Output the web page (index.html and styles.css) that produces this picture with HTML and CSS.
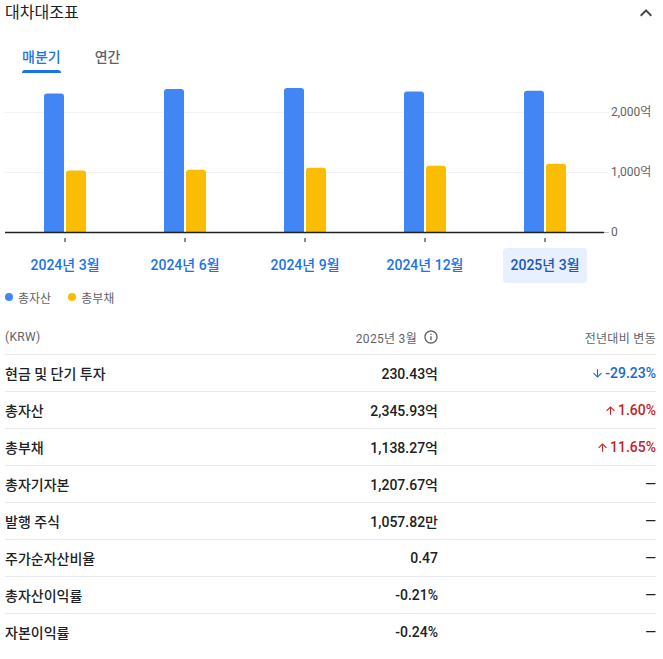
FILE: index.html
```html
<!DOCTYPE html>
<html lang="ko">
<head>
<meta charset="utf-8">
<title>대차대조표</title>
<link rel="stylesheet" href="styles.css">
</head>
<body>
<div class="card">
  <div class="head">
    <h2 class="title">대차대조표</h2>
    <svg class="chevron" viewBox="0 0 24 24" width="24" height="24"><path d="M12 8l-6 6 1.41 1.41L12 10.83l4.59 4.58L18 14z"/></svg>
  </div>

  <div class="tabs">
    <div class="tab active"><span>매분기</span><i class="bar"></i></div>
    <div class="tab"><span>연간</span><i class="bar"></i></div>
  </div>

  <svg class="chart" width="651" height="170" viewBox="0 0 651 170">
    <line class="grid" x1="0" y1="36.5" x2="604" y2="36.5"/>
    <line class="grid" x1="0" y1="96.5" x2="604" y2="96.5"/>
    <line class="grid0" x1="598" y1="156.5" x2="604" y2="156.5"/>
    <text class="ylab" x="606" y="37">2,000억</text>
    <text class="ylab" x="606" y="97">1,000억</text>
    <text class="ylab" x="606" y="157">0</text>

    <path class="b1" d="M39 156V20.4a3 3 0 0 1 3-3h14a3 3 0 0 1 3 3V156z"/>
    <path class="b2" d="M61 156V97.4a3 3 0 0 1 3-3h14a3 3 0 0 1 3 3V156z"/>

    <path class="b1" d="M159 156V16a3 3 0 0 1 3-3h14a3 3 0 0 1 3 3V156z"/>
    <path class="b2" d="M181 156V96.7a3 3 0 0 1 3-3h14a3 3 0 0 1 3 3V156z"/>

    <path class="b1" d="M279 156V15a3 3 0 0 1 3-3h14a3 3 0 0 1 3 3V156z"/>
    <path class="b2" d="M301 156V94.7a3 3 0 0 1 3-3h14a3 3 0 0 1 3 3V156z"/>

    <path class="b1" d="M399 156V18.4a3 3 0 0 1 3-3h14a3 3 0 0 1 3 3V156z"/>
    <path class="b2" d="M421 156V92.7a3 3 0 0 1 3-3h14a3 3 0 0 1 3 3V156z"/>

    <path class="b1" d="M519 156V17.7a3 3 0 0 1 3-3h14a3 3 0 0 1 3 3V156z"/>
    <path class="b2" d="M541 156V90.7a3 3 0 0 1 3-3h14a3 3 0 0 1 3 3V156z"/>

    <line class="axis" x1="0" y1="156.5" x2="599" y2="156.5"/>
    <line class="tick" x1="60" y1="162" x2="60" y2="166"/>
    <line class="tick" x1="180" y1="162" x2="180" y2="166"/>
    <line class="tick" x1="300" y1="162" x2="300" y2="166"/>
    <line class="tick" x1="420" y1="162" x2="420" y2="166"/>
    <line class="tick" x1="540" y1="162" x2="540" y2="166"/>
  </svg>

  <div class="xlabels">
    <div class="xcell"><span class="xbtn">2024년 3월</span></div>
    <div class="xcell"><span class="xbtn">2024년 6월</span></div>
    <div class="xcell"><span class="xbtn">2024년 9월</span></div>
    <div class="xcell"><span class="xbtn">2024년 12월</span></div>
    <div class="xcell"><span class="xbtn selected">2025년 3월</span></div>
  </div>

  <div class="legend">
    <span class="dot blue"></span><span class="ltext">총자산</span>
    <span class="dot yellow"></span><span class="ltext">총부채</span>
  </div>

  <div class="table">
    <div class="row header">
      <div class="c1">(KRW)</div>
      <div class="c2">2025년 3월
        <svg class="info" viewBox="0 0 24 24" width="16" height="16"><path d="M11 7h2v2h-2zm0 4h2v6h-2zm1-9C6.48 2 2 6.48 2 12s4.48 10 10 10 10-4.48 10-10S17.52 2 12 2zm0 18c-4.41 0-8-3.59-8-8s3.59-8 8-8 8 3.59 8 8-3.59 8-8 8z"/></svg>
      </div>
      <div class="c3">전년대비 변동</div>
    </div>
    <div class="row">
      <div class="c1">현금 및 단기 투자</div>
      <div class="c2">230.43억</div>
      <div class="c3 down"><svg class="arrow" viewBox="0 0 24 24" width="13" height="13"><path d="M20 12l-1.41-1.41L13 16.17V4h-2v12.17l-5.58-5.59L4 12l8 8 8-8z"/></svg>-29.23%</div>
    </div>
    <div class="row">
      <div class="c1">총자산</div>
      <div class="c2">2,345.93억</div>
      <div class="c3 up"><svg class="arrow" viewBox="0 0 24 24" width="13" height="13"><path d="M4 12l1.41 1.41L11 7.83V20h2V7.83l5.58 5.59L20 12l-8-8-8 8z"/></svg>1.60%</div>
    </div>
    <div class="row">
      <div class="c1">총부채</div>
      <div class="c2">1,138.27억</div>
      <div class="c3 up"><svg class="arrow" viewBox="0 0 24 24" width="13" height="13"><path d="M4 12l1.41 1.41L11 7.83V20h2V7.83l5.58 5.59L20 12l-8-8-8 8z"/></svg>11.65%</div>
    </div>
    <div class="row">
      <div class="c1">총자기자본</div>
      <div class="c2">1,207.67억</div>
      <div class="c3">—</div>
    </div>
    <div class="row">
      <div class="c1">발행 주식</div>
      <div class="c2">1,057.82만</div>
      <div class="c3">—</div>
    </div>
    <div class="row">
      <div class="c1">주가순자산비율</div>
      <div class="c2">0.47</div>
      <div class="c3">—</div>
    </div>
    <div class="row">
      <div class="c1">총자산이익률</div>
      <div class="c2">-0.21%</div>
      <div class="c3">—</div>
    </div>
    <div class="row">
      <div class="c1">자본이익률</div>
      <div class="c2">-0.24%</div>
      <div class="c3">—</div>
    </div>
  </div>
</div>
</body>
</html>
```

FILE: styles.css
```css
* { box-sizing: border-box; }
html, body { margin: 0; padding: 0; background: #fff; }
body {
  font-family: "Roboto", "Noto Sans CJK KR", sans-serif;
  font-feature-settings: "palt";
  color: #202124;
}
.card { width: 651px; margin-left: 5px; }

.head { height: 26px; display: flex; align-items: center; justify-content: space-between; }
.title { margin: 0; font-size: 16px; font-weight: 400; line-height: 26px; color: #202124; }
.chevron { fill: #444746; margin-right: -1.5px; margin-top: 0; }

.tabs { display: flex; gap: 34px; padding-top: 21px; padding-left: 17px; }
.tab { display: flex; flex-direction: column; align-items: stretch; font-size: 14px; line-height: 20px; font-weight: 500; color: #5f6368; }
.tab .bar { display: block; height: 3px; margin-top: 3px; border-radius: 3px 3px 0 0; background: transparent; }
.tab.active { color: #1a73e8; }
.tab.active .bar { background: #1a73e8; }

.chart { display: block; margin-top: 3px; }
.chart .grid { stroke: #f1f3f4; stroke-width: 1; }
.chart .grid0 { stroke: #bdc1c6; stroke-width: 1; }
.chart .axis { stroke: #202124; stroke-width: 1.5; }
.chart .tick { stroke: #5f6368; stroke-width: 1.5; }
.chart .b1 { fill: #4285f4; }
.chart .b2 { fill: #fbbc04; }
.chart .ylab { font-family: "Roboto", "Noto Sans CJK KR", sans-serif; font-size: 12px; fill: #5f6368; dominant-baseline: middle; }

.xlabels { display: grid; grid-template-columns: repeat(5, 120px); margin-top: 2px; }
.xcell { display: flex; justify-content: center; }
.xbtn { display: block; height: 35px; line-height: 35px; padding: 0 7.5px; border-radius: 4px; font-size: 14px; font-weight: 500; color: #1a73e8; white-space: nowrap; }
.xbtn.selected { background: #e8f0fe; color: #185abc; }

.legend { display: flex; align-items: center; height: 28px; font-size: 12px; color: #5f6368; }
.dot { width: 8px; height: 8px; border-radius: 50%; }
.dot.blue { background: #4285f4; }
.dot.yellow { background: #fbbc04; margin-left: 17px; }
.ltext { margin-left: 5px; }

.table { margin-top: 9px; }
.row { display: grid; grid-template-columns: 1fr 160px 218px; align-items: center; height: 37px; border-top: 1px solid #e8eaed; font-size: 14px; font-weight: 500; color: #202124; }
.row.header { height: 34px; border-top: none; font-size: 12px; font-weight: 400; color: #5f6368; letter-spacing: 0.3px; }
.c1 { white-space: nowrap; }
.c2, .c3 { text-align: right; white-space: nowrap; }
.header .c2 { display: flex; align-items: center; justify-content: flex-end; gap: 6px; }
.info { fill: #5f6368; margin-right: -1px; }
.arrow { vertical-align: -2px; margin-right: 1px; }
.down { color: #1967d2; }
.down .arrow { fill: #1967d2; }
.up { color: #c5221f; }
.up .arrow { fill: #c5221f; }
```
